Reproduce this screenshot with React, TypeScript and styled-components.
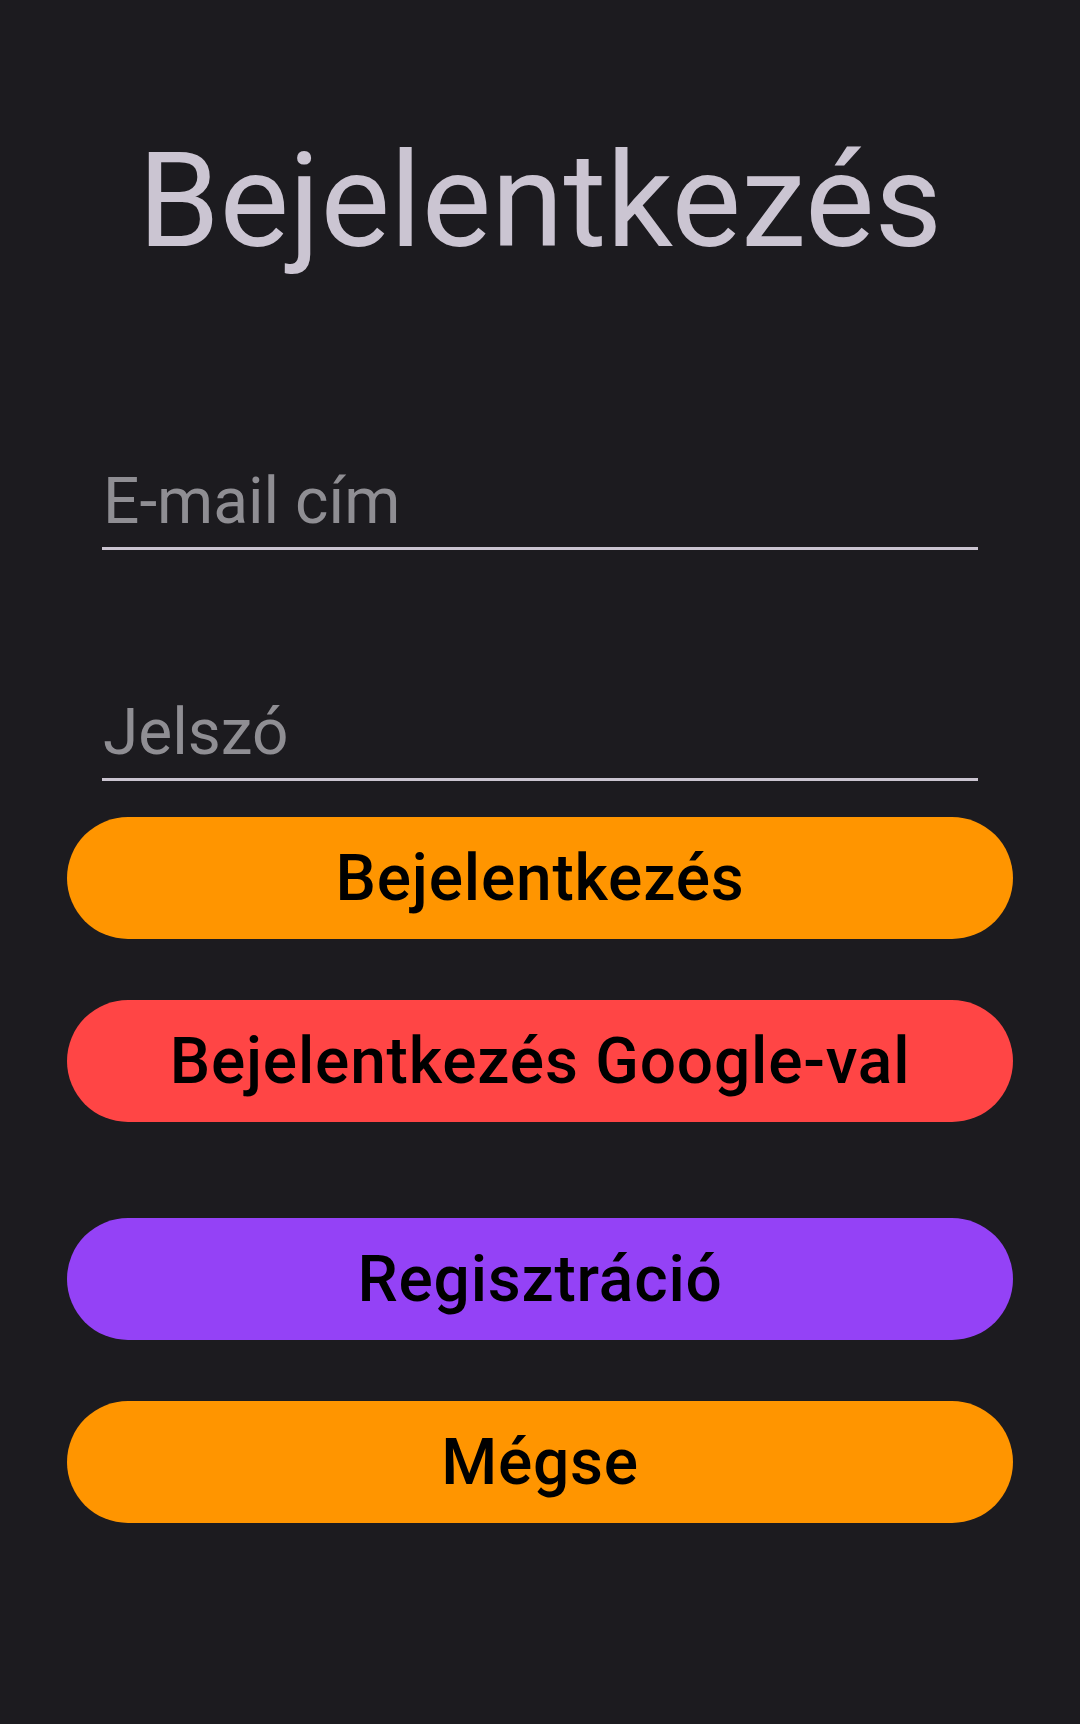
import React from "react";
import styled, { createGlobalStyle } from "styled-components";

const GlobalStyle = createGlobalStyle`
  html, body {
    margin: 0;
    padding: 0;
    background: #1c1b1f;
  }
  * { box-sizing: border-box; }
`;

const Page = styled.div`
  min-height: 1724px;
  background: #1c1b1f;
  display: flex;
  flex-direction: column;
  align-items: center;
  font-family: Roboto, "Noto Sans", sans-serif;
`;

const Title = styled.h1`
  margin: 135px 0 0;
  font-size: 131px;
  line-height: 132px;
  font-weight: 400;
  color: #cbc5d2;
  text-align: center;
`;

const Form = styled.form`
  width: 100%;
  display: flex;
  flex-direction: column;
  align-items: center;
  margin-top: 194px;
`;

const Field = styled.input<{ $gap?: number }>`
  width: 876px;
  height: 89px;
  margin-top: ${(p) => p.$gap ?? 0}px;
  padding: 0 0 6px 1px;
  border: none;
  border-bottom: 3px solid #cac4d0;
  background: transparent;
  outline: none;
  font-family: Roboto, "Noto Sans", sans-serif;
  font-size: 64px;
  line-height: 80px;
  color: #e6e1e5;
  &::placeholder {
    color: #8f8e93;
  }
`;

const Button = styled.button<{ $bg: string; $gap: number }>`
  width: 946px;
  height: 122px;
  margin-top: ${(p) => p.$gap}px;
  border: none;
  border-radius: 61px;
  background: ${(p) => p.$bg};
  color: #000;
  font-family: Roboto, "Noto Sans", sans-serif;
  font-size: 64px;
  font-weight: 500;
  letter-spacing: 0.8px;
  display: flex;
  align-items: center;
  justify-content: center;
  padding: 0;
  cursor: pointer;
`;

export default function App() {
  return (
    <>
      <GlobalStyle />
      <Page>
        <Title>Bejelentkezés</Title>
        <Form onSubmit={(e) => e.preventDefault()}>
          <Field type="email" placeholder="E-mail cím" />
          <Field type="password" placeholder="Jelszó" $gap={142} />
          <Button type="submit" $bg="#ff9500" $gap={36}>Bejelentkezés</Button>
          <Button type="button" $bg="#ff4545" $gap={61}>Bejelentkezés Google-val</Button>
          <Button type="button" $bg="#9442f6" $gap={96}>Regisztráció</Button>
          <Button type="button" $bg="#ff9500" $gap={61}>Mégse</Button>
        </Form>
      </Page>
    </>
  );
}
